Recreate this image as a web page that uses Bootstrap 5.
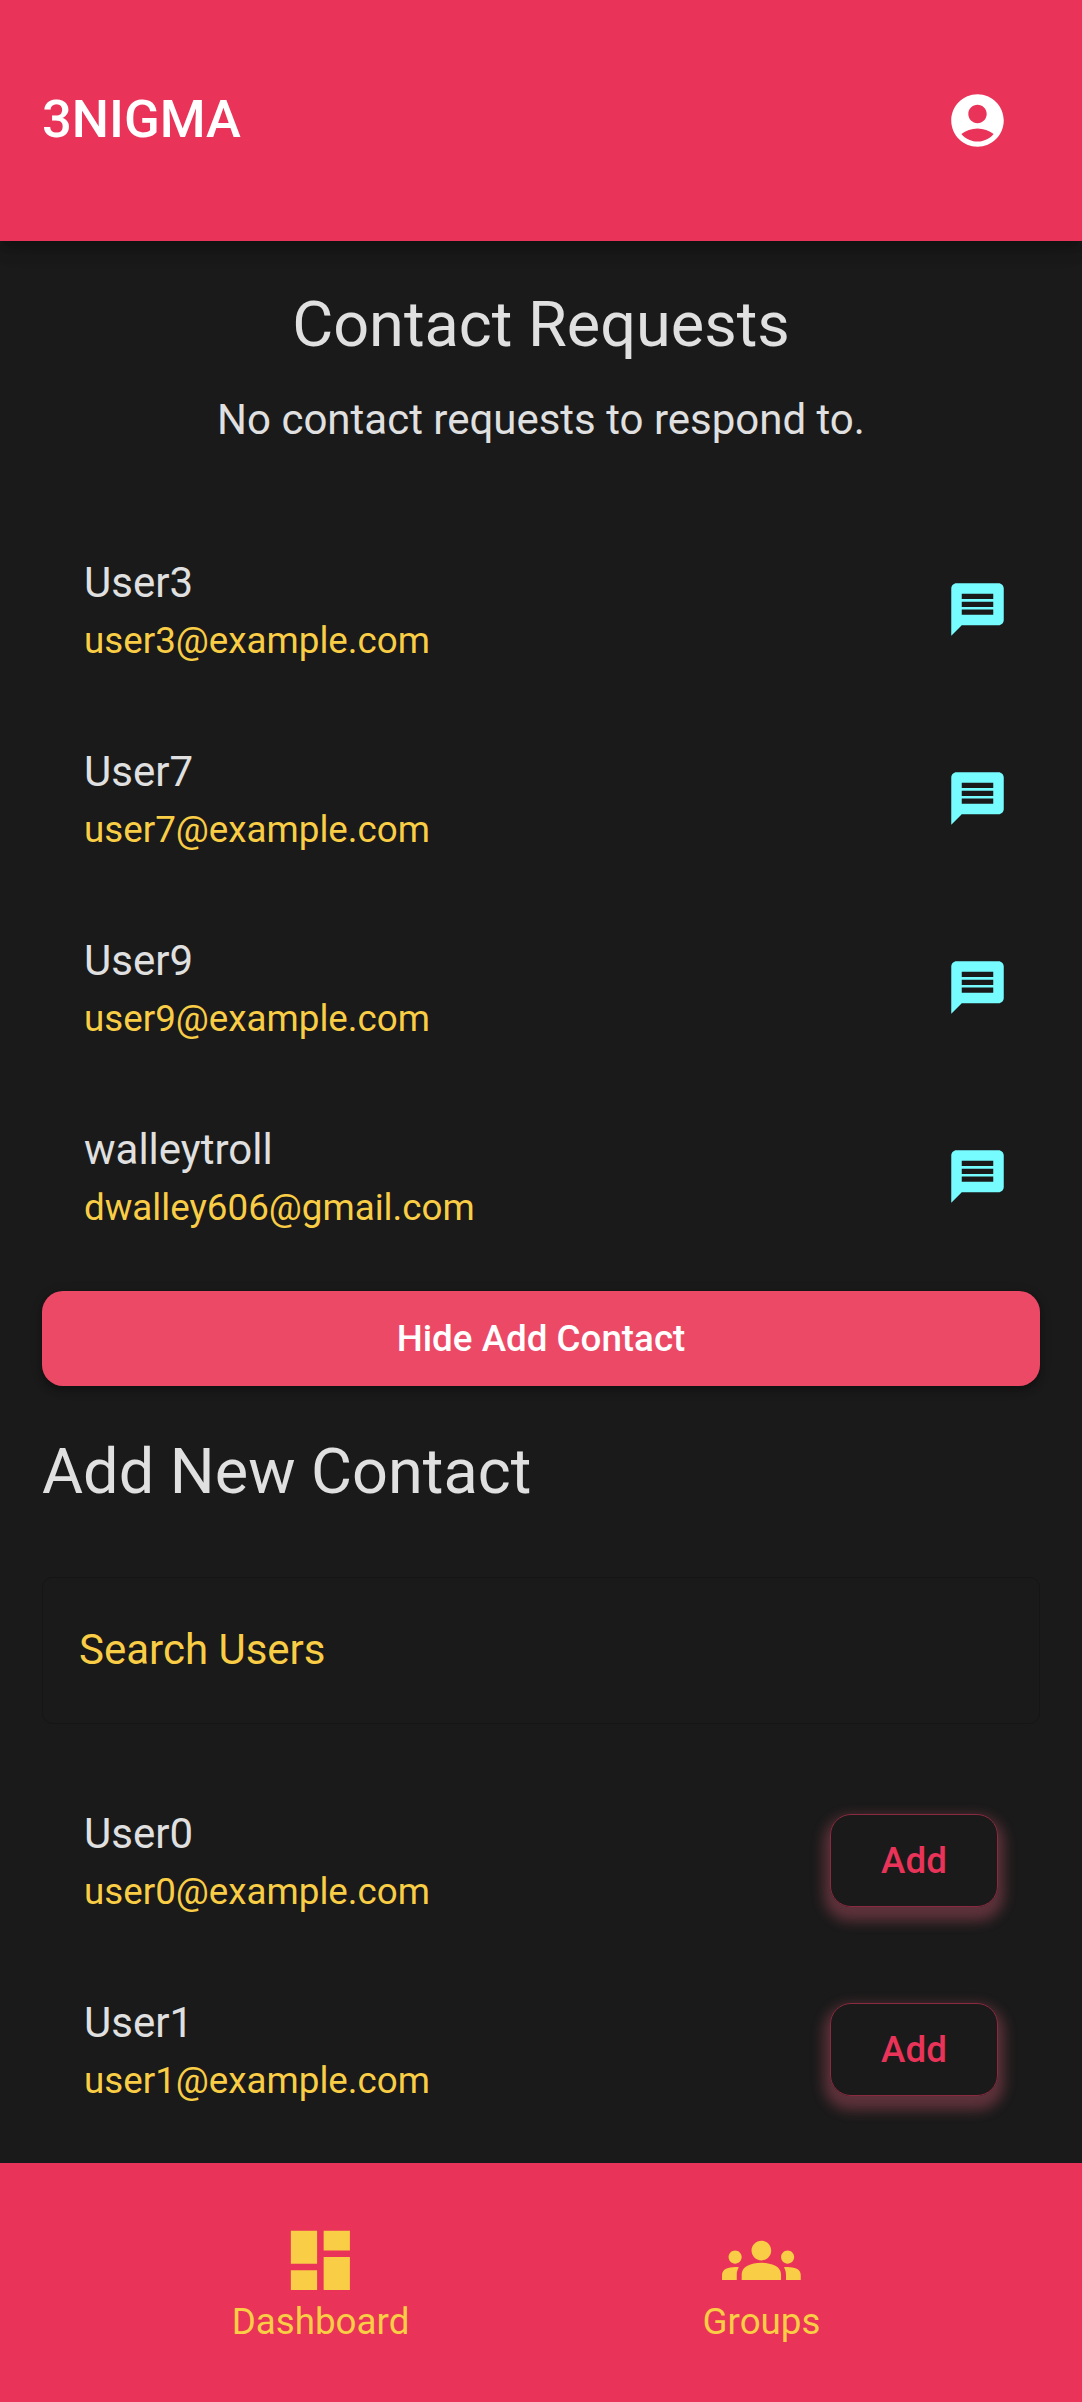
<!DOCTYPE html>
<html lang="en">
<head>
<meta charset="utf-8">
<meta name="viewport" content="width=device-width, initial-scale=1">
<title>3NIGMA</title>
<link rel="stylesheet" href="https://cdn.jsdelivr.net/npm/bootstrap@5.3.0/dist/css/bootstrap.min.css">
<style>
  :root { --brand: #ea3358; --gold: #f9cd45; --ink: #1a1a1a; --pale: #e0e0e0; --cyan: #76fcff; }
  body { font-family: Roboto, "Liberation Sans", sans-serif; background: var(--ink); color: var(--pale); font-size: 42px; line-height: 63px; }
  .shell { height: 2402px; overflow: hidden; }
  .topbar { height: 241px; background: var(--brand); padding: 0 73px 1px 42px; z-index: 2;
    box-shadow: 0 5px 10.5px -2.6px rgba(0,0,0,.2), 0 10.5px 13px 0 rgba(0,0,0,.14), 0 2.6px 26px 0 rgba(0,0,0,.12); }
  .topbar .navbar-brand { font-size: 52.5px; font-weight: 500; line-height: 84px; padding-bottom: 3px; }
  .ico { width: 63px; height: 63px; fill: currentColor; display: block; flex: none; }
  .ico-nav { width: 78.75px; height: 78.75px; }
  .page { padding: 42px 42px 0; }
  .title { font-size: 63px; line-height: 84px; font-weight: 400; }
  .notice { margin-top: 21px; }
  .people { padding: 21px 0; }
  .contacts { margin-top: 42.5px; padding-bottom: 20px; }
  .results { margin-top: 20.5px; }
  .person { padding: 36.75px 42px; height: 189.05px; background: transparent; color: inherit; border: 0; }
  .person .mail { color: var(--gold); font-size: 36.75px; line-height: 54px; }
  .person .ico { color: var(--cyan); margin-right: -10.5px; }
  .act { font-size: 36.75px; font-weight: 500; line-height: 64.3px; border-radius: 21px; }
  .act-main { height: 95.8px; padding: 16px; border: 0; background: #ec4967; color: #fff;
    box-shadow: 0 5px 8px -2.6px rgba(0,0,0,.2), 0 2.6px 5px 0 rgba(0,0,0,.14), 0 2.6px 13px 0 rgba(0,0,0,.12); }
  .act-add { width: 168px; height: 92.3px; padding: 13px 0 12px; color: var(--brand); border: 1px solid #8a2a40;
    box-shadow: 0 7.9px 13.1px 5.25px rgba(255,105,135,.3); }
  .add-title { margin-top: 44px; }
  .field { height: 147px; margin-top: 63px; padding: 0 36px 2px; border: 1px solid #151515; border-radius: 10.5px; color: var(--gold); }
  .bottombar { height: 239px; background: var(--brand); color: var(--gold); z-index: 2; }
  .tab { width: 441px; font-size: 36.75px; line-height: 44px; color: inherit; padding: 0; }
</style>
</head>
<body>
<div class="shell d-flex flex-column">
  <header class="topbar navbar flex-nowrap flex-shrink-0 position-relative">
    <span class="navbar-brand text-white pt-0 m-0">3NIGMA</span>
    <svg class="ico text-white" viewBox="0 0 24 24" role="img" aria-label="Account"><path d="M12 2C6.480 2 2 6.480 2 12s4.480 10 10 10 10-4.480 10-10S17.520 2 12 2m0 4c1.930 0 3.500 1.570 3.500 3.500S13.930 13 12 13s-3.500-1.570-3.500-3.500S10.070 6 12 6m0 14c-2.030 0-4.430-.82-6.140-2.880C7.550 15.800 9.680 15 12 15s4.450.8 6.140 2.120C16.430 19.180 14.030 20 12 20"/></svg>
  </header>

  <main class="page flex-grow-1 overflow-hidden">
    <section class="text-center">
      <h1 class="title m-0">Contact Requests</h1>
      <p class="notice mb-0">No contact requests to respond to.</p>
    </section>

    <ul class="people contacts list-group list-group-flush mb-0">
      <li class="person list-group-item d-flex align-items-center justify-content-between"><div><div>User3</div><div class="mail">user3@example.com</div></div><svg class="ico" viewBox="0 0 24 24"><path id="chat" d="M20 2H4c-1.100 0-1.990.9-1.990 2L2 22l4-4h14c1.100 0 2-.9 2-2V4c0-1.100-.9-2-2-2m-2 12H6v-2h12zm0-3H6V9h12zm0-3H6V6h12z"/></svg></li>
      <li class="person list-group-item d-flex align-items-center justify-content-between"><div><div>User7</div><div class="mail">user7@example.com</div></div><svg class="ico" viewBox="0 0 24 24"><use href="#chat"/></svg></li>
      <li class="person list-group-item d-flex align-items-center justify-content-between"><div><div>User9</div><div class="mail">user9@example.com</div></div><svg class="ico" viewBox="0 0 24 24"><use href="#chat"/></svg></li>
      <li class="person list-group-item d-flex align-items-center justify-content-between"><div><div>walleytroll</div><div class="mail">dwalley606@gmail.com</div></div><svg class="ico" viewBox="0 0 24 24"><use href="#chat"/></svg></li>
    </ul>

    <button type="button" class="btn act act-main w-100 d-block">Hide Add Contact</button>

    <h2 class="title add-title mb-0">Add New Contact</h2>
    <div class="field d-flex align-items-center">Search Users</div>

    <ul class="people results list-group list-group-flush mb-0">
      <li class="person list-group-item d-flex align-items-center justify-content-between"><div><div>User0</div><div class="mail">user0@example.com</div></div><button type="button" class="btn act act-add">Add</button></li>
      <li class="person list-group-item d-flex align-items-center justify-content-between"><div><div>User1</div><div class="mail">user1@example.com</div></div><button type="button" class="btn act act-add">Add</button></li>
    </ul>
  </main>

  <nav class="bottombar d-flex justify-content-center flex-shrink-0">
    <a class="tab nav-link d-flex flex-column align-items-center justify-content-center" href="#"><svg class="ico ico-nav" viewBox="0 0 24 24"><path d="M3 13h8V3H3zm0 8h8v-6H3zm10 0h8V11h-8zm0-18v6h8V3z"/></svg><span>Dashboard</span></a>
    <a class="tab nav-link d-flex flex-column align-items-center justify-content-center" href="#"><svg class="ico ico-nav" viewBox="0 0 24 24"><path d="M12 12.750c1.630 0 3.070.39 4.240.9 1.080.48 1.760 1.560 1.760 2.730V18H6v-1.610c0-1.180.68-2.260 1.760-2.730 1.170-.52 2.610-.91 4.240-.91M4 13c1.100 0 2-.9 2-2s-.9-2-2-2-2 .9-2 2 .9 2 2 2m1.130 1.100c-.37-.06-.74-.1-1.130-.1-.99 0-1.930.21-2.780.58C.48 14.900 0 15.620 0 16.430V18h4.500v-1.610c0-.83.23-1.610.63-2.290M20 13c1.100 0 2-.9 2-2s-.9-2-2-2-2 .9-2 2 .9 2 2 2m4 3.430c0-.81-.48-1.530-1.220-1.850-.85-.37-1.790-.58-2.780-.58-.39 0-.76.04-1.130.1.4.68.63 1.460.63 2.290V18H24zM12 6c1.660 0 3 1.340 3 3s-1.340 3-3 3-3-1.340-3-3 1.340-3 3-3"/></svg><span>Groups</span></a>
  </nav>
</div>
<script src="https://cdn.jsdelivr.net/npm/bootstrap@5.3.0/dist/js/bootstrap.bundle.min.js"></script>
</body>
</html>
